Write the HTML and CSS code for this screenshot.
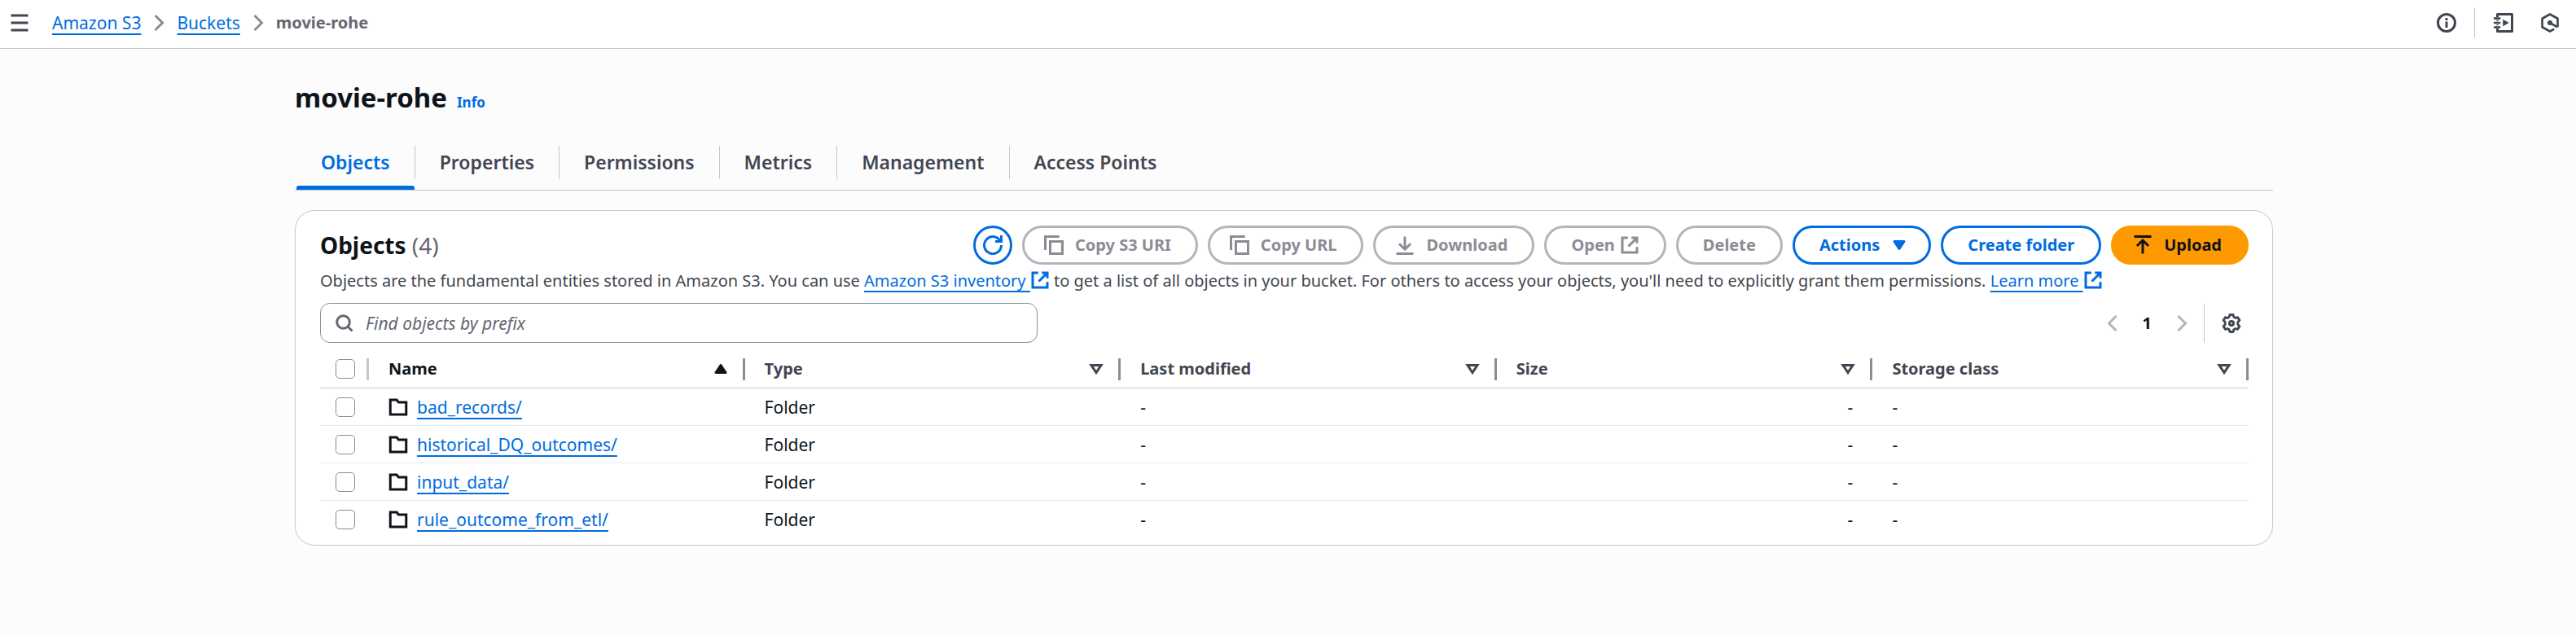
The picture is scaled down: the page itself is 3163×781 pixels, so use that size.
FILE: index.html
```html
<!DOCTYPE html>
<html lang="en">
<head>
<meta charset="utf-8">
<title>movie-rohe - S3 bucket</title>
<link rel="stylesheet" href="styles.css">
</head>
<body>
<svg class="sprite" aria-hidden="true">
  <symbol id="angle" viewBox="0 0 16 16"><path d="m5 2 6 6-6 6"/></symbol>
  <symbol id="copy" viewBox="0 0 16 16"><path d="M12.5 1H1v11M5 5h10v10H5z"/></symbol>
  <symbol id="external" viewBox="0 0 16 16"><path d="M9.500 2H14v4.500M7 9l7-7M14 9.500V14H2V2h4.500"/></symbol>
  <symbol id="caret" viewBox="0 0 16 16"><path d="M4 5h8l-4 6z"/></symbol>
  <symbol id="folder" viewBox="0 0 16 16"><path d="M1.500 2h5.200L8.300 4h6.200v10h-13z"/></symbol>
</svg>

<header class="topbar">
  <button class="icon-button" aria-label="Open navigation"><svg class="icon" viewBox="0 0 16 16"><path d="M1 2h14M1 8h14M1 14h14"/></svg></button>
  <nav class="breadcrumbs" aria-label="Breadcrumbs">
    <a class="link" href="#">Amazon S3</a>
    <svg class="icon angle"><use href="#angle"/></svg>
    <a class="link" href="#">Buckets</a>
    <svg class="icon angle"><use href="#angle"/></svg>
    <span class="current">movie-rohe</span>
  </nav>
  <div class="tools">
    <button class="icon-button" aria-label="Info"><svg class="icon" viewBox="0 0 16 16"><circle cx="8" cy="8" r="7"/><path d="M8 7v5M8 4v2"/></svg></button>
    <span class="tools-divider"></span>
    <button class="icon-button" aria-label="Tutorials"><svg class="icon" viewBox="0 0 16 16"><path stroke-linejoin="round" d="M3 3.300V1h12v14H3v-2.300M3 5.800v.7M3 9.500v.7"/><path stroke-width="1.700" d="M0 4.400h5.500M0 8h5.500M0 11.600h5.500"/><path class="solid" d="M7.500 5.200v5.600l5-2.800z"/></svg></button>
    <button class="icon-button" aria-label="Assistant"><svg class="icon" viewBox="0 0 16 16"><path stroke-width="1.800" stroke-linejoin="round" d="M14.300 11.500V4.500L8 1 1.700 4.500v7L8 15l3.500-1.900M8 8l6.200 3.600"/><circle class="solid" cx="8" cy="8" r="2"/></svg></button>
  </div>
</header>

<main class="page">
  <div class="title-row">
    <h1>movie-rohe</h1>
    <a class="info" href="#">Info</a>
  </div>

  <nav class="tabs" aria-label="Bucket sections">
    <a class="tab active" href="#" aria-current="page">Objects</a>
    <a class="tab" href="#">Properties</a>
    <a class="tab" href="#">Permissions</a>
    <a class="tab" href="#">Metrics</a>
    <a class="tab" href="#">Management</a>
    <a class="tab" href="#">Access Points</a>
  </nav>

  <section class="panel">
    <div class="panel-header">
      <h2>Objects <span class="count">(4)</span></h2>
      <div class="actions">
        <button class="btn round" aria-label="Refresh"><svg class="icon" viewBox="0 0 16 16"><path d="M10 5h5V0M15 8a7 7 0 1 1-.7-3"/></svg></button>
        <button class="btn lead" disabled><svg class="icon"><use href="#copy"/></svg>Copy S3 URI</button>
        <button class="btn lead" disabled><svg class="icon"><use href="#copy"/></svg>Copy URL</button>
        <button class="btn lead" disabled><svg class="icon" viewBox="0 0 16 16"><path d="M1 15h14M8 1v10.500M3.300 6.800 8 11.500l4.700-4.700"/></svg>Download</button>
        <button class="btn tight" disabled>Open<svg class="icon"><use href="#external"/></svg></button>
        <button class="btn" disabled>Delete</button>
        <button class="btn trail">Actions<svg class="icon filled"><use href="#caret"/></svg></button>
        <button class="btn">Create folder</button>
        <button class="btn lead primary"><svg class="icon" viewBox="0 0 16 16"><path d="M1 1h14M8 15V4M3.300 8.700 8 4l4.700 4.700"/></svg>Upload</button>
      </div>
    </div>
    <p class="description">Objects are the fundamental entities stored in Amazon S3. You can use <a class="link" href="#">Amazon S3 inventory </a><svg class="icon inline"><use href="#external"/></svg> to get a list of all objects in your bucket. For others to access your objects, you'll need to explicitly grant them permissions. <a class="link" href="#">Learn more </a><svg class="icon inline"><use href="#external"/></svg></p>

    <div class="filter-row">
      <label class="search">
        <svg class="icon" viewBox="0 0 16 16"><circle cx="7" cy="7" r="5.200"/><path d="m14.300 14.300-3.800-3.800"/></svg>
        <input type="text" placeholder="Find objects by prefix" aria-label="Find objects by prefix">
      </label>
      <div class="pagination">
        <button class="icon-button faded" aria-label="Previous page"><svg class="icon flip"><use href="#angle"/></svg></button>
        <span class="page-number">1</span>
        <button class="icon-button faded" aria-label="Next page"><svg class="icon"><use href="#angle"/></svg></button>
        <span class="settings">
          <button class="icon-button" aria-label="Preferences"><svg class="icon" viewBox="0 0 16 16"><path stroke-width="1.900" stroke-linejoin="round" d="M6.600 1h2.800l.5 1.900 1.300.7 1.900-.5 1.500 2.400L13.200 7v2l1.400 1.500-1.500 2.400-1.900-.5-1.300.7-.5 1.900H6.600l-.5-1.900-1.300-.7-1.900.5-1.500-2.400L2.800 9V7L1.400 5.500l1.500-2.400 1.900.5 1.300-.7z"/><circle cx="8" cy="8" r="1.700"/></svg></button>
        </span>
      </div>
    </div>

    <table class="objects">
      <colgroup><col class="col-check"><col><col><col><col><col></colgroup>
      <thead>
        <tr>
          <th class="check"><span class="head"><input type="checkbox" aria-label="Select all"></span></th>
          <th class="sorted"><span class="head">Name<svg class="icon filled flip"><use href="#caret"/></svg></span></th>
          <th><span class="head">Type<svg class="icon"><use href="#caret"/></svg></span></th>
          <th><span class="head">Last modified<svg class="icon"><use href="#caret"/></svg></span></th>
          <th><span class="head">Size<svg class="icon"><use href="#caret"/></svg></span></th>
          <th><span class="head">Storage class<svg class="icon"><use href="#caret"/></svg></span></th>
        </tr>
      </thead>
      <tbody>
        <tr><td class="check"><input type="checkbox" aria-label="Select bad_records/"></td><td><span class="name"><svg class="icon"><use href="#folder"/></svg><a class="link" href="#">bad_records/</a></span></td><td>Folder</td><td>-</td><td class="num">-</td><td>-</td></tr>
        <tr><td class="check"><input type="checkbox" aria-label="Select historical_DQ_outcomes/"></td><td><span class="name"><svg class="icon"><use href="#folder"/></svg><a class="link" href="#">historical_DQ_outcomes/</a></span></td><td>Folder</td><td>-</td><td class="num">-</td><td>-</td></tr>
        <tr><td class="check"><input type="checkbox" aria-label="Select input_data/"></td><td><span class="name"><svg class="icon"><use href="#folder"/></svg><a class="link" href="#">input_data/</a></span></td><td>Folder</td><td>-</td><td class="num">-</td><td>-</td></tr>
        <tr><td class="check"><input type="checkbox" aria-label="Select rule_outcome_from_etl/"></td><td><span class="name"><svg class="icon"><use href="#folder"/></svg><a class="link" href="#">rule_outcome_from_etl/</a></span></td><td>Folder</td><td>-</td><td class="num">-</td><td>-</td></tr>
      </tbody>
    </table>
  </section>
</main>
</body>
</html>
```
FILE: styles.css
```css
* { box-sizing: border-box; }

body {
  margin: 0;
  background: #fcfcfd;
  color: #0f141a;
  font: 400 20px/30px "Noto Sans", "Open Sans", sans-serif;
}

button, input { font: inherit; color: inherit; margin: 0; }
h1, h2, p { margin: 0; }
.sprite { display: none; }

.icon {
  width: 24px;
  height: 24px;
  flex: none;
  fill: none;
  stroke: currentColor;
  stroke-width: 2;
}
.icon .solid { fill: currentColor; stroke: none; }
.filled { fill: currentColor; stroke-linejoin: round; }
.flip { transform: rotate(180deg); }

.link {
  color: #006ce0;
  text-decoration: underline 2px;
  text-underline-offset: 5px;
  text-decoration-skip-ink: none;
}

.icon-button {
  display: flex;
  padding: 0;
  border: 0;
  background: none;
  color: #424650;
}
.faded { color: #b4b4bb; }

.topbar {
  display: flex;
  align-items: center;
  height: 60px;
  padding: 0 20px 4px 12px;
  background: #fff;
  border-bottom: 1px solid #c6c6cd;
}
.breadcrumbs { display: flex; align-items: center; margin-left: 28px; font-size: 21px; }
.angle { margin: 0 10px; color: #8c8c94; }
.current { color: #656871; font-size: 20px; font-weight: 700; }
.tools { display: flex; align-items: center; margin-left: auto; }
.tools-divider { width: 1px; height: 37px; margin: 0 23px 0 22px; background: #c6c6cd; }
.tools .icon-button + .icon-button { margin-left: 33px; }

.page { padding: 36px 372px 0 362px; }

.title-row { display: flex; align-items: baseline; gap: 12px; }
h1 { font-size: 33px; line-height: 48px; font-weight: 700; }
.info { color: #006ce0; font-size: 17px; font-weight: 700; text-decoration: none; }

.tabs {
  display: flex;
  margin-top: 26px;
  padding-left: 2px;
  border-bottom: 1px solid #c6c6cd;
}
.tab {
  position: relative;
  padding: 14px 30px 19px;
  color: #424650;
  font-size: 23px;
  font-weight: 600;
  line-height: 30px;
  text-decoration: none;
}
.tab + .tab { padding-left: 31px; }
.tab + .tab::before {
  content: "";
  position: absolute;
  left: 0;
  top: 9px;
  width: 1px;
  height: 41px;
  background: #c6c6cd;
}
.tab.active { color: #006ce0; }
.tab.active::after {
  content: "";
  position: absolute;
  left: 0;
  right: 0;
  bottom: 0;
  height: 5px;
  border-radius: 3px 3px 0 0;
  background: #006ce0;
}

.panel {
  margin-top: 24px;
  padding: 18px 29px 8px 30px;
  background: #fff;
  border: 1px solid #c6c6cd;
  border-radius: 24px;
}
.panel-header { display: flex; align-items: center; justify-content: space-between; }
h2 { font-size: 28px; line-height: 36px; font-weight: 700; }
.count { color: #656871; font-weight: 400; }

.actions { display: flex; gap: 12px; }
.btn {
  display: flex;
  align-items: center;
  gap: 12px;
  height: 48px;
  padding: 0 30px;
  border: 3px solid #006ce0;
  border-radius: 24px;
  background: #fff;
  color: #006ce0;
  font-weight: 700;
}
.btn.lead { gap: 14px; padding-left: 24px; }
.btn.trail { padding-right: 24px; }
.btn.tight { gap: 6px; }
.btn.round { width: 48px; padding: 0; justify-content: center; }
.btn:disabled { border-color: #b4b4bb; color: #8c8c94; }
.btn.primary { border-color: #f90; background: #f90; color: #0f141a; }

.description { margin-top: 5px; color: #424650; }
.inline { vertical-align: -4px; color: #006ce0; }

.filter-row { display: flex; align-items: center; justify-content: space-between; margin-top: 12px; }
.search {
  display: flex;
  align-items: center;
  gap: 14px;
  width: 881px;
  height: 49px;
  padding: 0 17px;
  border: 1px solid #8c8c94;
  border-radius: 12px;
  color: #656871;
  font-size: 21px;
}
.search input { flex: 1; min-width: 0; padding: 0; border: 0; outline: 0; background: none; }
.search input::placeholder { color: #656871; font-style: italic; opacity: 1; }

.pagination { display: flex; align-items: center; }
.page-number { margin: 0 25px; font-weight: 700; }
.settings { display: flex; align-items: center; height: 48px; margin-left: 15px; padding: 0 9px 0 21px; border-left: 1px solid #c6c6cd; }

.objects { width: 100%; margin-top: 15px; border-collapse: separate; border-spacing: 0; table-layout: fixed; }
.col-check { width: 60px; }
.objects th { height: 41px; padding: 0 0 6px 24px; border-bottom: 1px solid #c6c6cd; color: #424650; text-align: left; font-weight: 700; }
.objects th.sorted { color: #0f141a; }
.head { display: flex; align-items: center; justify-content: space-between; height: 27px; padding-right: 15px; border-right: 3px solid #8c8c94; }
.objects .check { padding-left: 19px; }
.check .head { border-color: #c6c6cd; }
.objects td { height: 46px; padding: 0 24px; border-bottom: 1px solid #ebebf0; font-size: 21px; }
.objects tbody tr:last-child td { border-bottom-color: transparent; }
.objects td.check { padding-right: 0; }
.objects .num { text-align: right; }
.name { display: flex; align-items: center; gap: 11px; }

input[type="checkbox"] {
  appearance: none;
  display: block;
  width: 24px;
  height: 24px;
  flex: none;
  border: 1px solid #8c8c94;
  border-radius: 5px;
  background: #fff;
}
```
